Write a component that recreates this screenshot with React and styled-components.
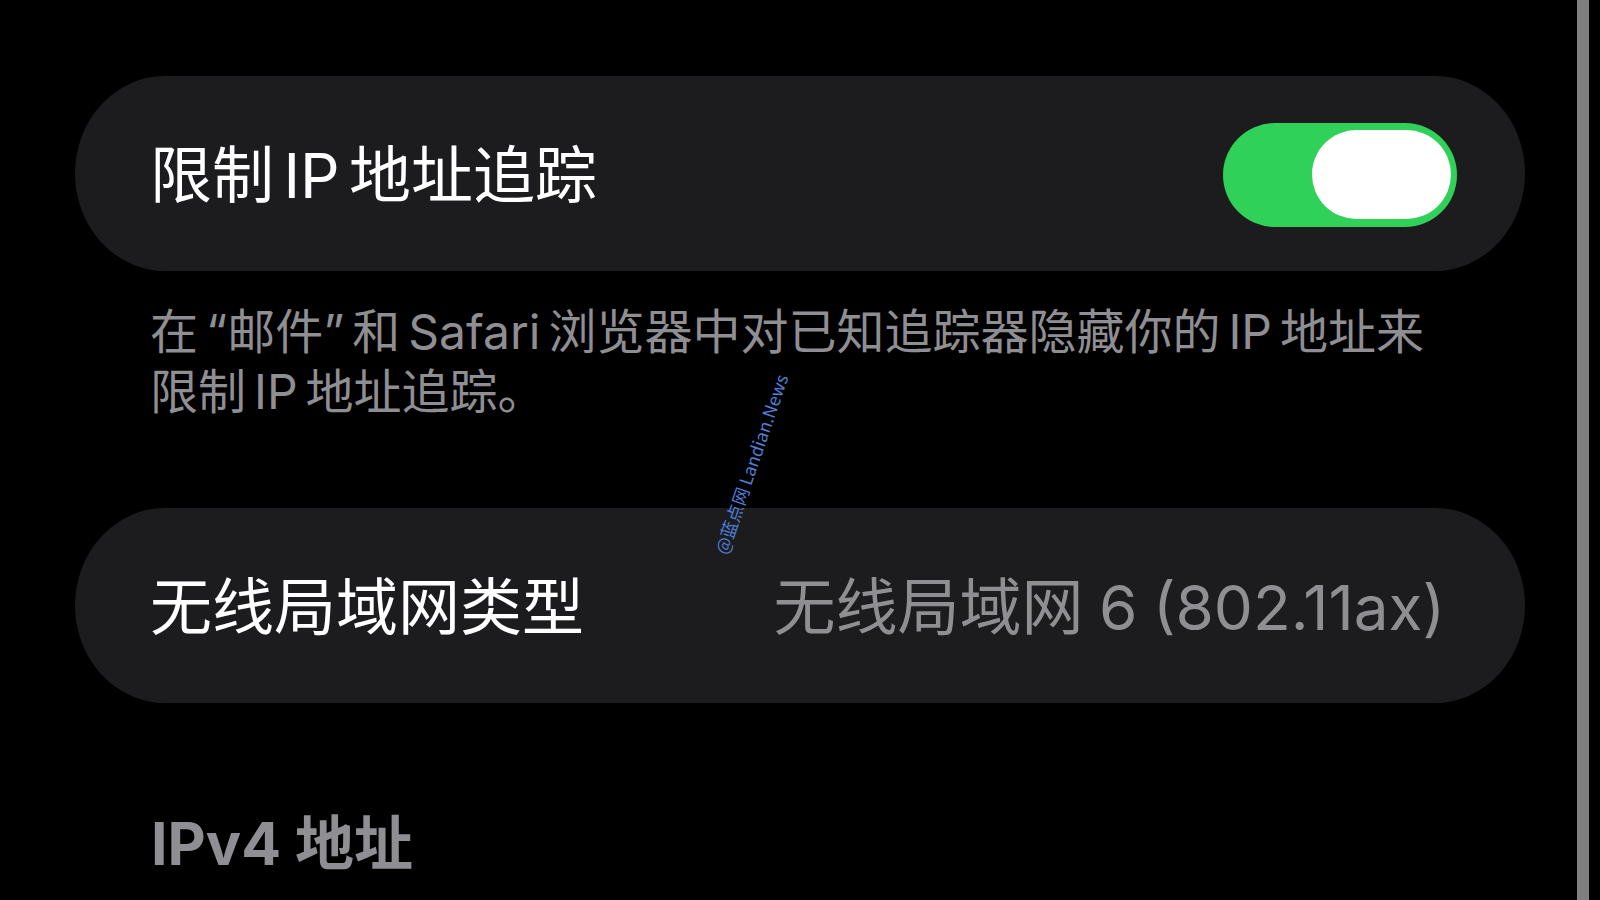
import React from "react";
import styled, { createGlobalStyle } from "styled-components";

const GlobalStyle = createGlobalStyle`
  html, body {
    margin: 0;
    padding: 0;
    background: #000;
  }
  body {
    font-family: Inter, "Noto Sans CJK SC", sans-serif;
    -webkit-font-smoothing: antialiased;
  }
`;

const Page = styled.div`
  position: relative;
  display: flex;
  width: 1600px;
  height: 900px;
  overflow: hidden;
  background: #000;
`;

const Content = styled.main`
  flex: 1;
  display: flex;
  flex-direction: column;
  padding: 76px 52px 0 75px;
`;

const Card = styled.section`
  height: 195px;
  flex-shrink: 0;
  display: flex;
  align-items: center;
  justify-content: space-between;
  padding: 0 68px 0 75px;
  background: #1c1c1e;
  border-radius: 90px / 97.5px;
  margin-top: ${(p) => p.$gap || 0}px;
`;

const Label = styled.span`
  font-size: 62px;
  line-height: 1;
  color: #ffffff;
  white-space: nowrap;
  word-spacing: -8px;
  margin-top: 4px;
`;

const Value = styled.span`
  font-size: 62px;
  line-height: 1;
  color: #8e8e93;
  white-space: nowrap;
  word-spacing: -2px;
  margin: 4px 12px 0 0;
`;

const Toggle = styled.div`
  width: 234px;
  height: 104px;
  box-sizing: border-box;
  display: flex;
  align-items: center;
  justify-content: flex-end;
  padding: 0 6px;
  border-radius: 52px;
  background: ${(p) => (p.$on ? "#30d158" : "#39393d")};
  margin-top: 2px;
`;

const Knob = styled.div`
  width: 139px;
  height: 89px;
  border-radius: 44.5px;
  background: #ffffff;
`;

const Footer = styled.p`
  margin: 31px 0 0 0;
  padding: 0 85px 0 75px;
  font-size: 48px;
  line-height: 60px;
  color: #8e8e93;
  word-spacing: -5.5px;
`;

const SectionHeader = styled.h2`
  margin: 111px 0 0 0;
  padding-left: 76px;
  font-size: 59px;
  line-height: 1;
  font-weight: 700;
  color: #8e8e93;
`;

const ScrollIndicator = styled.div`
  width: 12px;
  margin-right: 11px;
  flex-shrink: 0;
  background: #7f7f7f;
`;

const Watermark = styled.div`
  position: absolute;
  left: 751px;
  top: 464px;
  transform: translate(-50%, -50%) rotate(-71deg);
  font-family: "Noto Sans CJK SC", "Open Sans", sans-serif;
  font-size: 17.5px;
  line-height: 1;
  color: #4f7fd6;
  white-space: nowrap;
  pointer-events: none;
`;

export default function App() {
  return (
    <>
      <GlobalStyle />
      <Page>
        <Content>
          <Card>
            <Label>限制 IP 地址追踪</Label>
            <Toggle $on>
              <Knob />
            </Toggle>
          </Card>
          <Footer>
            在 “邮件” 和 Safari 浏览器中对已知追踪器隐藏你的 IP 地址来限制 IP 地址追踪。
          </Footer>
          <Card $gap={86}>
            <Label>无线局域网类型</Label>
            <Value>无线局域网 6 (802.11ax)</Value>
          </Card>
          <SectionHeader>IPv4 地址</SectionHeader>
        </Content>
        <ScrollIndicator />
        <Watermark>@蓝点网 Landian.News</Watermark>
      </Page>
    </>
  );
}
